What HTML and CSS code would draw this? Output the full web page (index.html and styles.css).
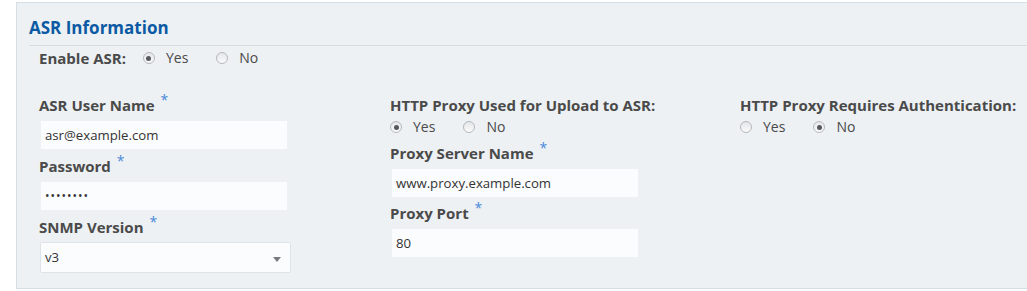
FILE: index.html
```html
<!DOCTYPE html>
<html>
<head>
<meta charset="utf-8">
<link rel="stylesheet" href="styles.css">
</head>
<body>
<div class="panel">
  <h2 class="title">ASR Information</h2>
  <div class="body">
    <div class="enable-row">
      <span class="label">Enable ASR:</span>
      <div class="radios">
        <label class="opt"><span class="radio checked"></span>Yes</label>
        <label class="opt"><span class="radio"></span>No</label>
      </div>
    </div>
    <div class="cols">
      <div class="col col1">
        <div class="field">
          <div class="label">ASR User Name <span class="req">*</span></div>
          <div class="input">asr@example.com</div>
        </div>
        <div class="field">
          <div class="label">Password <span class="req">*</span></div>
          <div class="input pwd">••••••••</div>
        </div>
        <div class="field field-select">
          <div class="label">SNMP Version <span class="req">*</span></div>
          <div class="select">v3<span class="caret"></span></div>
        </div>
      </div>
      <div class="col col2">
        <div class="field">
          <div class="label">HTTP Proxy Used for Upload to ASR:</div>
          <div class="radios">
            <label class="opt"><span class="radio checked"></span>Yes</label>
            <label class="opt"><span class="radio"></span>No</label>
          </div>
        </div>
        <div class="field">
          <div class="label">Proxy Server Name <span class="req">*</span></div>
          <div class="input">www.proxy.example.com</div>
        </div>
        <div class="field">
          <div class="label">Proxy Port <span class="req">*</span></div>
          <div class="input">80</div>
        </div>
      </div>
      <div class="col col3">
        <div class="field">
          <div class="label">HTTP Proxy Requires Authentication:</div>
          <div class="radios">
            <label class="opt"><span class="radio"></span>Yes</label>
            <label class="opt"><span class="radio checked"></span>No</label>
          </div>
        </div>
      </div>
    </div>
  </div>
</div>
</body>
</html>
```
FILE: styles.css
```css
html, body {
  margin: 0;
  padding: 0;
  background: #ffffff;
  overflow: hidden;
}
body {
  font-family: "Open Sans", "Noto Sans", sans-serif;
  color: #4a4a4a;
}
.panel {
  margin: 2px 0 0 16px;
  width: 1100px;
  height: 287px;
  box-sizing: border-box;
  border: 1px solid #d6dee6;
  background: #edf1f4;
  overflow: hidden;
}
.title {
  margin: 0 0 0 12px;
  padding: 13px 0 5px 0;
  font-size: 17px;
  line-height: 24px;
  font-weight: 700;
  color: #0b5aa3;
  border-bottom: 1px solid #d5dbe0;
}
.body {
  padding-left: 22px;
}
.enable-row {
  display: flex;
  align-items: center;
  height: 24px;
}
.enable-row .label {
  margin-right: 17px;
}
.label {
  font-size: 15px;
  font-weight: 700;
  line-height: 20px;
  color: #4a4a4a;
}
.req {
  color: #4a8ad8;
  font-weight: 400;
  font-size: 14px;
  position: relative;
  top: -6px;
  margin-left: 2px;
}
.radios {
  display: flex;
  align-items: center;
  font-size: 14px;
  line-height: 20px;
  color: #4a4a4a;
}
.opt {
  display: inline-flex;
  align-items: center;
  margin-right: 28px;
}
.radio {
  width: 12px;
  height: 12px;
  border-radius: 50%;
  border: 1px solid #b5b9bd;
  background: linear-gradient(#e4e6e8, #fbfbfb);
  margin-right: 11px;
  box-sizing: border-box;
  display: inline-flex;
  align-items: center;
  justify-content: center;
}
.radio.checked::after {
  content: "";
  width: 5px;
  height: 5px;
  border-radius: 50%;
  background: #55595d;
}
.cols {
  display: flex;
  margin-top: 25px;
}
.col1 { width: 351px; }
.col2 { width: 350px; }
.col3 { width: 300px; }
.field {
  display: flex;
  flex-direction: column;
}
.col1 .field + .field { margin-top: 7px; }
.col1 .field-select { margin-top: 6px; }
.col2 .field + .field { margin-top: 6px; }
.col2 .field:last-child { margin-top: 6px; }
.field .label { margin-bottom: 5px; }
.field-select .label { margin-bottom: 4px; }
.field .radios { margin-top: -3px; }
.input {
  width: 246px;
  height: 28px;
  box-sizing: border-box;
  margin-left: 2px;
  background: #fbfcfe;
  font-size: 13.2px;
  line-height: 28px;
  padding-left: 4px;
  color: #333;
}
.input.pwd {
  font-size: 12px;
  letter-spacing: 1px;
}
.select {
  position: relative;
  width: 251px;
  height: 31px;
  box-sizing: border-box;
  margin-left: 1px;
  border: 1px solid #dde3e9;
  border-radius: 2px;
  background: #fbfcfe;
  font-size: 13.2px;
  line-height: 29px;
  padding-left: 4px;
  color: #333;
}
.caret {
  position: absolute;
  right: 9px;
  top: 14px;
  width: 0;
  height: 0;
  border-left: 4px solid transparent;
  border-right: 4px solid transparent;
  border-top: 5px solid #777b7f;
}
```
